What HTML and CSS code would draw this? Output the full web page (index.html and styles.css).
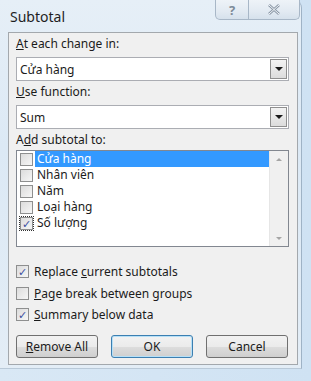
FILE: index.html
```html
<!DOCTYPE html>
<html lang="en">
<head>
    <meta charset="UTF-8">
    <meta name="viewport" content="width=device-width, initial-scale=1.0">
    <title>Subtotal</title>
    <link rel="stylesheet" href="styles.css">
</head>
<body>
    <div class="window">
        <div class="titlebar">
            <span class="title">Subtotal</span>
            <div class="caption-buttons">
                <span class="cap-btn help">?</span>
                <span class="cap-btn close">
                    <svg width="14" height="11" viewBox="0 0 14 11">
                        <path d="M2 1 L12 10 M12 1 L2 10" stroke="#8a97a6" stroke-width="2.6" fill="none"/>
                        <path d="M2 1 L12 10 M12 1 L2 10" stroke="#f4f7fa" stroke-width="1" fill="none"/>
                    </svg>
                </span>
            </div>
        </div>

        <div class="panel">
            <label class="field-label"><u>A</u>t each change in:</label>
            <div class="combo">
                <span class="combo-text">Cửa hàng</span>
                <span class="drop-btn"><span class="arrow"></span></span>
            </div>

            <label class="field-label"><u>U</u>se function:</label>
            <div class="combo">
                <span class="combo-text">Sum</span>
                <span class="drop-btn"><span class="arrow"></span></span>
            </div>

            <label class="field-label">A<u>d</u>d subtotal to:</label>
            <div class="listbox">
                <ul class="items">
                    <li class="item selected"><span class="box"></span><span class="item-text">Cửa hàng</span></li>
                    <li class="item"><span class="box"></span><span class="item-text">Nhân viên</span></li>
                    <li class="item"><span class="box"></span><span class="item-text">Năm</span></li>
                    <li class="item"><span class="box"></span><span class="item-text">Loại hàng</span></li>
                    <li class="item focused"><span class="box checked">&#10003;</span><span class="item-text">Số lượng</span></li>
                </ul>
                <div class="scrollbar">
                    <span class="sarrow up"></span>
                    <span class="sarrow down"></span>
                </div>
            </div>

            <div class="options">
                <div class="option"><span class="box checked">&#10003;</span><span>Replace <u>c</u>urrent subtotals</span></div>
                <div class="option"><span class="box"></span><span><u>P</u>age break between groups</span></div>
                <div class="option"><span class="box checked">&#10003;</span><span><u>S</u>ummary below data</span></div>
            </div>

            <div class="buttons">
                <button class="btn"><u>R</u>emove All</button>
                <button class="btn default">OK</button>
                <button class="btn">Cancel</button>
            </div>
        </div>
    </div>
</body>
</html>
```

FILE: styles.css
```css
body {
    margin: 0;
    width: 311px;
    height: 381px;
    overflow: hidden;
    background: linear-gradient(90deg, #d9e8f5 0%, #cfe2f3 100%);
    font-family: "Noto Sans", "Open Sans", sans-serif;
    font-size: 12px;
    color: #1b1b1b;
}

.window {
    width: 302px;
    height: 369px;
    box-sizing: border-box;
    border-right: 1px solid #9fb3c6;
    border-bottom: 1px solid #b9c9d8;
    border-radius: 0 8px 0 0;
    background: linear-gradient(180deg, #e6eff7 0%, #dce9f5 40%, #e3edf6 100%);
    padding: 0 4px 4px 8px;
}

.titlebar {
    height: 32px;
    display: flex;
    justify-content: space-between;
    align-items: flex-start;
}

.title {
    font-size: 14px;
    color: #1e1e1e;
    margin-top: 7px;
    margin-left: 2px;
}

.caption-buttons {
    display: flex;
    margin-right: -3px;
}

.cap-btn {
    height: 19px;
    display: flex;
    align-items: center;
    justify-content: center;
    border: 1px solid #a8b7c7;
    border-top: none;
    background: linear-gradient(180deg, #eef3f8 0%, #e2eaf2 60%, #d6e1ec 100%);
}

.help {
    width: 32px;
    border-radius: 0 0 0 5px;
    color: #7d8a98;
    font-weight: bold;
    font-size: 13px;
}

.close {
    width: 50px;
    border-left: none;
    border-radius: 0 0 5px 0;
}

.panel {
    width: 290px;
    height: 333px;
    box-sizing: border-box;
    background: #f0f0f0;
    border: 1px solid #a3a8ad;
    padding: 3px 8px 0 7px;
}

.field-label {
    display: block;
    line-height: 16px;
    height: 16px;
}

.combo {
    height: 24px;
    box-sizing: border-box;
    border: 1px solid #abadb3;
    background: #fff;
    display: flex;
    align-items: center;
    justify-content: space-between;
    margin: 5px 0 3px;
}

.combo-text {
    padding-left: 3px;
}

.drop-btn {
    width: 17px;
    height: 20px;
    margin-right: 1px;
    box-sizing: border-box;
    border: 1px solid #8f8f8f;
    background: linear-gradient(180deg, #f3f3f3 0%, #dcdcdc 100%);
    display: flex;
    align-items: center;
    justify-content: center;
}

.arrow {
    width: 0;
    height: 0;
    border-left: 4px solid transparent;
    border-right: 4px solid transparent;
    border-top: 4px solid #1a1a1a;
}

.listbox {
    height: 97px;
    box-sizing: border-box;
    border: 1px solid #828790;
    background: #fff;
    display: flex;
    margin-top: 2px;
}

.items {
    list-style: none;
    margin: 0;
    padding: 0;
    flex: 1;
}

.item {
    height: 16px;
    display: flex;
    align-items: center;
    padding-left: 3px;
}

.item-text {
    line-height: 16px;
    padding: 0 2px;
    margin-left: 2px;
}

.item.selected .item-text {
    background: #3399ff;
    color: #fff;
    flex: 1;
}

.box {
    width: 13px;
    height: 13px;
    box-sizing: border-box;
    border: 1px solid #8e8f8f;
    background: linear-gradient(135deg, #dcdcdc 0%, #f6f6f6 100%);
    display: inline-flex;
    align-items: center;
    justify-content: center;
    font-size: 11px;
    line-height: 1;
    color: #3c4fa0;
    flex: none;
}

.item.focused .box {
    outline: 1px dotted #333;
    outline-offset: 0;
}

.scrollbar {
    width: 18px;
    background: #f0f0f0;
    border-left: 1px solid #e6e6e6;
    display: flex;
    flex-direction: column;
    justify-content: space-between;
    align-items: center;
    padding: 7px 0 6px;
}

.sarrow {
    width: 0;
    height: 0;
    border-left: 3px solid transparent;
    border-right: 3px solid transparent;
}

.sarrow.up {
    border-bottom: 3px solid #a5a5a5;
}

.sarrow.down {
    border-top: 3px solid #a5a5a5;
}

.options {
    margin-top: 14px;
}

.option {
    height: 21px;
    display: flex;
    align-items: center;
    gap: 5px;
    margin-bottom: 0.5px;
}

.buttons {
    display: flex;
    justify-content: space-between;
    margin-top: 10px;
    padding-right: 1px;
}

.btn {
    width: 82px;
    height: 23px;
    font-family: "Noto Sans", "Open Sans", sans-serif;
    font-size: 12px;
    color: #1b1b1b;
    border: 1px solid #707070;
    border-radius: 3px;
    background: linear-gradient(180deg, #f2f2f2 0%, #ebebeb 50%, #dddddd 51%, #cfcfcf 100%);
    padding: 0;
}

.btn.default {
    border-color: #3c7fb1;
    box-shadow: inset 0 0 0 1px #b6e0f7;
    background: linear-gradient(180deg, #f2f2f2 0%, #ebebeb 50%, #dddddd 51%, #cfcfcf 100%);
}
```
